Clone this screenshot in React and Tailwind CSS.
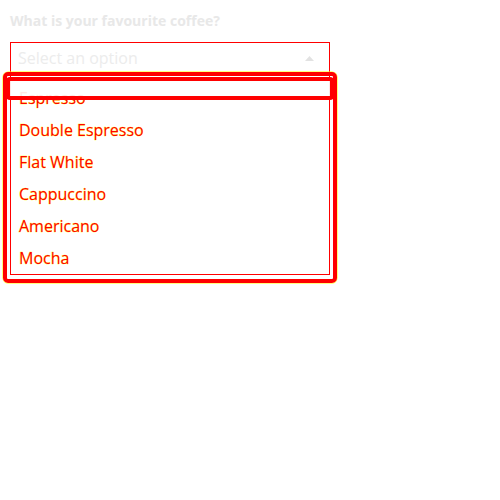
import React, { useState } from "react";

const coffees = ["Espresso", "Double Espresso", "Flat White", "Cappuccino", "Americano", "Mocha"];

export default function App() {
  const [value, setValue] = useState("");

  return (
    <div className="w-[500px] h-[500px] bg-white px-[10px] pt-[11px] font-['Open_Sans',sans-serif]">
      <label className="block text-[14px] leading-[20px] font-bold text-[#e8e8e8]">
        What is your favourite coffee?
      </label>

      <div className="relative mt-[11px] w-[320px]">
        <button
          type="button"
          className="flex h-[32px] w-full items-center justify-between border border-[#ff0000] pl-[7px] pr-[15px] text-[16px] text-[#ececec]"
        >
          <span>{value || "Select an option"}</span>
          <svg width="9" height="5" viewBox="0 0 9 5">
            <path d="M0 5 L4.5 0 L9 5 Z" fill="#e2e2e2" />
          </svg>
        </button>

        {/* listbox */}
        <ul className="absolute left-0 top-[32px] h-[201px] w-[320px] border border-[#ff0000] bg-white pt-[7px]">
          {coffees.map((item) => (
            <li
              key={item}
              onClick={() => setValue(item)}
              className="flex h-[32px] items-center pl-[8px] text-[16px] text-[#ff0000] [-webkit-text-stroke:0.5px_#ffff00] [paint-order:stroke_fill]"
            >
              {item}
            </li>
          ))}
        </ul>

        {/* focus ring round the popup */}
        <div className="pointer-events-none absolute left-[-7px] top-[30px] h-[211px] w-[334px] rounded-[5px] border-4 border-[#ff0000] shadow-[0_0_0_0.5px_#ffff00]" />
        {/* focused option ring */}
        <div className="pointer-events-none absolute left-[-4px] top-[35px] h-[23px] w-[328px] rounded-[4px] border-4 border-[#ff0000] bg-white/90" />
      </div>
    </div>
  );
}
